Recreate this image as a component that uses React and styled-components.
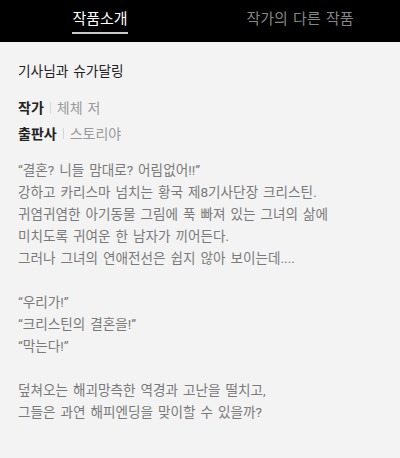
import styled, { createGlobalStyle } from 'styled-components';

const GlobalStyle = createGlobalStyle`
  html, body {
    margin: 0;
    padding: 0;
    background: #f3f3f3;
  }
  body {
    font-family: Roboto, "Noto Sans CJK KR", sans-serif;
  }
`;

const Page = styled.div`
  width: 400px;
  min-height: 458px;
  background: #f3f3f3;
`;

const TabBar = styled.nav`
  display: flex;
  height: 42px;
  background: #000;
`;

const Tab = styled.button`
  flex: 1;
  display: flex;
  justify-content: center;
  align-items: stretch;
  background: none;
  border: 0;
  padding: 0;
  font-family: inherit;
  cursor: pointer;
`;

const TabLabel = styled.span`
  display: flex;
  align-items: center;
  font-size: 15px;
  word-spacing: 1.5px;
  color: ${({ $active }) => ($active ? '#ffffff' : '#858585')};
  border-bottom: 2px solid ${({ $active }) => ($active ? '#c8c8c8' : 'transparent')};
  padding-top: 2px;
  margin-bottom: 8px;
`;

const Content = styled.section`
  padding: 18px 18px 20px;
`;

const BookTitle = styled.h1`
  margin: 0;
  font-size: 13.7px;
  font-weight: 400;
  line-height: 22px;
  word-spacing: 1.5px;
  color: #222;
`;

const Meta = styled.dl`
  margin: 14px 0 0;
  display: flex;
  flex-direction: column;
  gap: 4px;
`;

const MetaRow = styled.div`
  display: flex;
  align-items: center;
  height: 22px;
  font-size: 14px;
  word-spacing: 1.5px;
`;

const MetaLabel = styled.dt`
  font-weight: 700;
  color: #222;
`;

const Divider = styled.span`
  width: 1px;
  height: 11px;
  background: #d6d6d6;
  margin: 0 6px;
`;

const MetaValue = styled.dd`
  margin: 0;
  color: #9a9a9a;
`;

const Intro = styled.p`
  margin: 15px 0 0;
  font-size: 13.6px;
  line-height: 22px;
  word-spacing: 1.6px;
  color: #7a7a7a;
  white-space: pre-line;
`;

const intro = `“결혼? 니들 맘대로? 어림없어!!”
강하고 카리스마 넘치는 황국 제8기사단장 크리스틴.
귀염귀염한 아기동물 그림에 푹 빠져 있는 그녀의 삶에
미치도록 귀여운 한 남자가 끼어든다.
그러나 그녀의 연애전선은 쉽지 않아 보이는데....

“우리가!”
“크리스틴의 결혼을!”
“막는다!”

덮쳐오는 해괴망측한 역경과 고난을 떨치고,
그들은 과연 해피엔딩을 맞이할 수 있을까?`;

const App = () => {
    const tabs = ['작품소개', '작가의 다른 작품'];
    const meta = [
        { label: '작가', value: '체체 저' },
        { label: '출판사', value: '스토리야' },
    ];

    return (
        <Page>
            <GlobalStyle />
            <TabBar>
                {tabs.map((tab, index) => (
                    <Tab key={tab}>
                        <TabLabel $active={index === 0}>{tab}</TabLabel>
                    </Tab>
                ))}
            </TabBar>
            <Content>
                <BookTitle>기사님과 슈가달링</BookTitle>
                <Meta>
                    {meta.map((item) => (
                        <MetaRow key={item.label}>
                            <MetaLabel>{item.label}</MetaLabel>
                            <Divider />
                            <MetaValue>{item.value}</MetaValue>
                        </MetaRow>
                    ))}
                </Meta>
                <Intro>{intro}</Intro>
            </Content>
        </Page>
    );
};

export default App;
